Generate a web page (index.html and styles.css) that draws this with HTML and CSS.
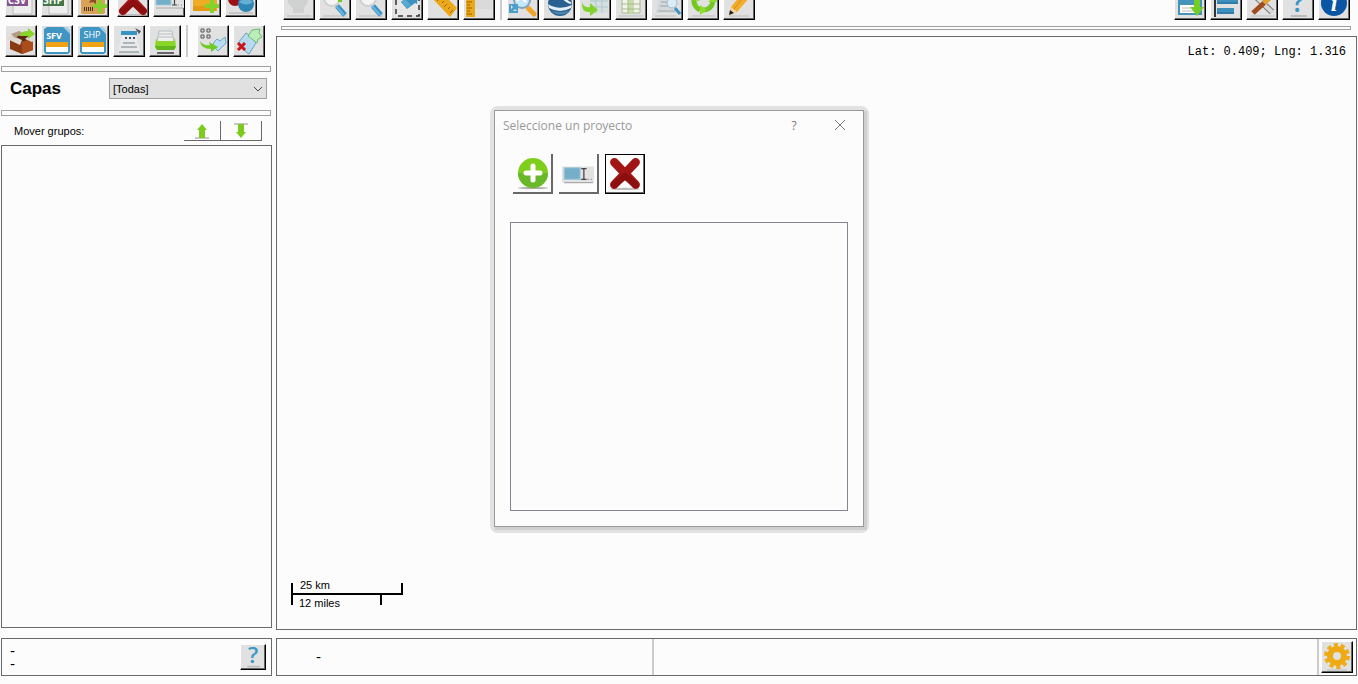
FILE: index.html
```html
<!DOCTYPE html>
<html lang="es">
<head>
<meta charset="UTF-8">
<meta name="viewport" content="width=device-width, initial-scale=1.0">
<title>Capas</title>
<link rel="stylesheet" href="styles.css">
</head>
<body>

<!-- shapes shared by several buttons -->
<svg class="defs" aria-hidden="true">
  <symbol id="plus" viewBox="0 0 14 14"><path d="M5 0h4v5h5v4H9v5H5V9H0V5h5z" fill="#84d32c"/></symbol>
  <symbol id="cross" viewBox="0 0 30 30">
    <ellipse cx="15" cy="29" rx="14" ry="1" fill="#bbb"/>
    <path d="M5 4l20 21M25 4L5 25" stroke="#a31414" stroke-width="8" stroke-linecap="round"/>
    <path d="M15 17L5 25M15 17l10 8" stroke="#8c0f0f" stroke-width="6" stroke-linecap="round"/>
  </symbol>
  <symbol id="rename" viewBox="0 0 30 30">
    <path d="M0 7h30v15H0z" fill="#e2e2e2"/><path d="M2 8h15v11H2z" fill="#75aec8" stroke="#a3c8d8"/>
    <path d="M2 22h27" stroke="#aaa"/><path d="M18 9h5M20.500 9v10M18 19h5" stroke="#444" stroke-width="1.200" fill="none"/>
    <path d="M24 19h1M27 19h1" stroke="#888"/>
  </symbol>
  <symbol id="file" viewBox="0 0 30 30">
    <path d="M5 1h17l6 6v19l-2 2H4l-2-2V3z" fill="#3f96c2"/><path d="M21 1l7 7V4l-3-3z" fill="#a5d0e4"/>
    <path d="M4 16h22v5H4z" fill="#f0a314"/><path d="M4 21h22v5H4z" fill="#fff"/>
  </symbol>
  <symbol id="lens" viewBox="0 0 30 30">
    <path d="M3 27h24" stroke="#bbb"/><circle cx="12" cy="9" r="8" fill="#f4f4f4" stroke="#cfcfcf" stroke-width="2"/>
    <path d="M17 17l8 9" stroke="#3d93c4" stroke-width="5"/><path d="M16 17l8 9" stroke="#68b6de" stroke-width="2"/>
  </symbol>
  <symbol id="help" viewBox="0 0 30 30">
    <text x="15" y="23" text-anchor="middle" font-family="Open Sans, sans-serif" font-weight="600" font-size="28" fill="#3c97c7">?</text>
    <path d="M8 27h16" stroke="#bbb" stroke-width="2"/>
  </symbol>
</svg>

<aside class="side">
  <div class="toolbar cut">
    <button class="tool" aria-label="Importar CSV"><svg viewBox="0 0 30 30"><path d="M7 10h19v18H7z" fill="#eee" stroke="#bbb"/><path d="M1 8h21v12H1z" fill="#87538f"/><text x="11" y="18" text-anchor="middle" class="tag">CSV</text></svg></button>
    <button class="tool" aria-label="Importar SHP"><svg viewBox="0 0 30 30"><path d="M7 10h19v18H7z" fill="#eee" stroke="#bbb"/><path d="M1 8h21v12H1z" fill="#437747"/><text x="11" y="18" text-anchor="middle" class="tag">SHP</text></svg></button>
    <button class="tool" aria-label="Nuevo paquete"><svg viewBox="0 0 30 30"><path d="M3 6h24v21l-2 1H4l-1-1z" fill="#d9a257"/><path d="M13 13l-2 4 4-1 3 2v-4z" fill="#8a4f20"/><path d="M6 23h10" stroke="#493118" stroke-width="4" stroke-dasharray="1 1"/><use href="#plus" x="15" y="13" width="14" height="14"/></svg></button>
    <button class="tool gap" aria-label="Eliminar capa"><svg viewBox="0 0 30 30"><use href="#cross" width="30" height="30"/></svg></button>
    <button class="tool" aria-label="Renombrar"><svg viewBox="0 0 30 30"><use href="#rename" width="30" height="30"/></svg></button>
    <button class="tool" aria-label="Nuevo grupo"><svg viewBox="0 0 30 30"><path d="M3 6h22l2 2v17H3z" fill="#eeae24"/><path d="M3 20h23v5H3z" fill="#e49a12"/><use href="#plus" x="15" y="13" width="14" height="14"/></svg></button>
    <button class="tool" aria-label="Estilos"><svg viewBox="0 0 30 30"><path d="M3 27h24" stroke="#aaa"/><circle cx="9" cy="13" r="7" fill="#9a1014"/><circle cx="20" cy="18" r="8" fill="#2e86b5"/><path d="M13 16q7-6 14 0-7 5-14 0" fill="#64b0d4"/></svg></button>
  </div>

  <div class="toolbar second">
    <button class="tool" aria-label="Exportar"><svg viewBox="0 0 30 30"><path d="M4 13l12 3 11-4v12l-11 4-12-5z" fill="#873a14"/><path d="M16 16l11-4v12l-11 4z" fill="#a94d1c"/><path d="M4 13l10-6 13 5-11 4z" fill="#5c280f"/><path d="M1 13l4-4 11 5-2 5zM10 6l6-2-3 5zM24 9l5 5-3 2-7-3z" fill="#ded9d2"/><path d="M5 8l8-3 4 2-8 5z" fill="#b69b84"/><path d="M13 10q2-5 9-5V2l7 6-7 5v-3z" fill="#88d42a"/></svg></button>
    <button class="tool" aria-label="Guardar SFV"><svg viewBox="0 0 30 30"><use href="#file" width="30" height="30"/><text x="12" y="13" text-anchor="middle" class="tag small">SFV</text></svg></button>
    <button class="tool" aria-label="Guardar SHP"><svg viewBox="0 0 30 30"><use href="#file" width="30" height="30"/><text x="14" y="12" text-anchor="middle" class="tag small thin">SHP</text></svg></button>
    <button class="tool" aria-label="Informe"><svg viewBox="0 0 30 30"><path d="M8 8h14l4 18H4z" fill="#e9eaeb"/><path d="M7 5h16v4H7z" fill="#3993c0"/><path d="M21 2l6 3-2 3z" fill="#555"/><path d="M11 12h10" stroke="#455058" stroke-width="2" stroke-dasharray="2 2"/><path d="M9 17h12M7 21h16M5 26h20" stroke="#aeb5b8" stroke-width="2"/></svg></button>
    <button class="tool" aria-label="Imprimir"><svg viewBox="0 0 30 30"><path d="M9 5h13l2 11H7z" fill="#eee" stroke="#b5bec2"/><path d="M9 8h13M8 11h15" stroke="#b5bec2"/><path d="M6 12l1 3h17l1-3 1 9-2 3H7l-2-3z" fill="#89d628"/><path d="M5 20h21l-2 4H7z" fill="#61b51d"/><path d="M7 27h17" stroke="#666" stroke-width="2"/></svg></button>
    <span class="sep"></span>
    <button class="tool" aria-label="Agregar al mapa"><svg viewBox="0 0 30 30"><path d="M3 3h3v3H3zM9 3h3v3H9zM3 9h3v3H3zM9 9h3v3H9z" fill="none" stroke="#555"/><path d="M16 16l3-3 3 2 5-4 1 6-8 8-5-5z" fill="#b9ddf2" stroke="#67a9cf"/><path d="M2 15q3 5 10 4l-1-3 9 5-7 5v-3Q3 23 2 15z" fill="#72ca25"/></svg></button>
    <button class="tool" aria-label="Quitar geometría"><svg viewBox="0 0 30 30"><path d="M4 17l8-10 5 3 5 7-7 11-4-3z" fill="#b7daef" stroke="#6aa3c8"/><path d="M14 10l4-6 8-1-1 4 3 4-4 2-1 4z" fill="#bcecb8" stroke="#68bd70"/><path d="M4 17l7 7M11 17l-7 7" stroke="#c9151c" stroke-width="3"/></svg></button>
  </div>

  <hr class="groove">
  <div class="layers-head">
    <label for="capas">Capas</label>
    <div class="select">
      <select id="capas"><option>[Todas]</option></select>
      <svg viewBox="0 0 10 6"><path d="M1 1l4 4 4-4" fill="none" stroke="#444"/></svg>
    </div>
  </div>
  <hr class="groove">
  <div class="move">
    <span>Mover grupos:</span>
    <button class="flat" aria-label="Subir"><svg viewBox="0 0 16 16"><path d="M1 15h14" stroke="#c8c8cc" stroke-width="2"/><path d="M8 1l5 6h-2v8H5V7H3z" fill="#7ecb1f"/></svg></button>
    <button class="flat" aria-label="Bajar"><svg viewBox="0 0 16 16"><path d="M1 1h14" stroke="#c8c8cc" stroke-width="2"/><path d="M8 15l5-6h-2V1H5v8H3z" fill="#7ecb1f"/></svg></button>
  </div>
  <div class="list"></div>
  <div class="status">
    <div class="counts"><span>-</span><span>-</span></div>
    <button class="tool small" aria-label="Ayuda"><svg viewBox="0 0 30 30"><use href="#help" width="30" height="30"/></svg></button>
  </div>
</aside>

<main class="main">
  <div class="toolbar cut">
    <button class="tool" aria-label="Mover mapa"><svg viewBox="0 0 30 30"><path d="M3 5h24l-4 10-3 4v5H9v-5l-5-5z" fill="#d0d1d1"/><path d="M3 27h24" stroke="#bbb"/></svg></button>
    <button class="tool" aria-label="Acercar"><svg viewBox="0 0 30 30"><use href="#lens" width="30" height="30"/><path d="M18 9h4v4h-4z" fill="#74c921"/></svg></button>
    <button class="tool" aria-label="Alejar"><svg viewBox="0 0 30 30"><use href="#lens" width="30" height="30"/></svg></button>
    <button class="tool" aria-label="Zoom a selección"><svg viewBox="0 0 30 30"><path d="M4 3h23v24H4z" fill="#e8e8e8" stroke="#333" stroke-width="1.500" stroke-dasharray="5 4"/><path d="M9 13l7-6 10-1-1 9-2-1-8 6z" fill="#3b93c3"/><path d="M9 13l4-3 6 6-4 3z" fill="#59a9d2"/></svg></button>
    <button class="tool" aria-label="Medir"><svg viewBox="0 0 30 30"><path d="M3 8l8-7 18 18-7 9z" fill="#eca817"/><path d="M12 9l-3 3M16 12l-2 2M19 15l-3 3M22 18l-2 2M25 21l-3 3" stroke="#95630d"/></svg></button>
    <button class="tool" aria-label="Regla"><svg viewBox="0 0 30 30"><path d="M11 2h17v18H11z" fill="#dadada"/><path d="M2 2h9v26H2z" fill="#eba817"/><path d="M3 13h5M3 16h3M3 19h5M3 22h3M3 25h5" stroke="#95630d"/></svg></button>
    <span class="sep"></span>
    <button class="tool" aria-label="Buscar en mapa"><svg viewBox="0 0 30 30"><path d="M20 19l6 6" stroke="#f0a52a" stroke-width="5" stroke-linecap="round"/><circle cx="14" cy="11" r="8" fill="#c4e8fa" stroke="#7ca5c4" stroke-width="2"/><path d="M9 12l4-4 5 5" stroke="#fff" stroke-width="2" fill="none"/><path d="M2 15h8v8L7 20l-3 3-2-2 3-3z" fill="#4b9dcb"/><path d="M2 15v8h8" fill="none" stroke="#4b9dcb" stroke-width="2"/></svg></button>
    <button class="tool" aria-label="Globo"><svg viewBox="0 0 30 30"><circle cx="16" cy="15" r="12" fill="#28608f"/><path d="M4 15q11 7 24 1l-1 3q-11 6-22 0z" fill="#e4edf4"/><path d="M6 21q10 4 20 0l-3 3q-7 3-13 0z" fill="#4c86b0"/><path d="M15 4q3 8 11 11l2-1Q20 10 18 3z" fill="#eff4f8"/></svg></button>
    <button class="tool" aria-label="Cargar mapa"><svg viewBox="0 0 30 30"><path d="M10 4h18v20H10z" fill="#d3e0df"/><path d="M16 4v20M22 4v20M10 12h18M10 18h18" stroke="#b3c9cc"/><path d="M2 13q1 6 8 5v-4l8 7-8 6v-4Q1 24 2 13z" fill="#80d32a"/></svg></button>
    <button class="tool" aria-label="Tabla"><svg viewBox="0 0 30 30"><path d="M6 4h18v20H6z" fill="#f1f4e8" stroke="#a8ba90"/><path d="M12 4h4v20h-4z" fill="#c7dda6"/><path d="M6 10h18M6 15h18M6 20h18M12 4v20M17 4v20" stroke="#a8ba90"/><path d="M3 27h24" stroke="#bbb"/></svg></button>
    <button class="tool" aria-label="Buscar atributos"><svg viewBox="0 0 30 30"><path d="M8 4h12l5 20H4z" fill="#d5d9db"/><path d="M9 13h10M8 17h10M6 22h17" stroke="#9ba6ac"/><circle cx="20" cy="14" r="5" fill="#d9edf7" stroke="#aab9c1"/><path d="M23 19l5 6" stroke="#3d93c4" stroke-width="3"/><path d="M3 27h21" stroke="#bbb"/></svg></button>
    <button class="tool" aria-label="Actualizar"><svg viewBox="0 0 30 30"><path d="M4 27h23" stroke="#bbb"/><path d="M6 9q-1 8 6 12M15 21q8 0 10-8M22 5q4 3 4 8" stroke="#72c721" stroke-width="5" fill="none"/><path d="M12 16l7 5-7 5zM2 11l6-5 4 6zM20 13h9l-4-5z" fill="#8cdb2f"/></svg></button>
    <button class="tool" aria-label="Editar"><svg viewBox="0 0 30 30"><path d="M5 27h20" stroke="#bbb"/><path d="M5 26l2-8L19 3l7 5-13 15z" fill="#f2ad2a"/><path d="M10 20L22 5" stroke="#d98814" stroke-width="1"/><path d="M5 26l2-8 6 5z" fill="#f4d9ae"/><path d="M5 26l1-5 4 3z" fill="#222"/></svg></button>
    <span class="spacer"></span>
    <button class="tool" aria-label="Guardar vista"><svg viewBox="0 0 30 30"><path d="M3 3h24v23H3z" fill="#4593ba"/><path d="M5 16h19v8H5z" fill="#fff"/><path d="M7 19h9M7 22h11" stroke="#bbb"/><path d="M19 8h6v10h4l-7 9-7-9h4z" fill="#74cd24"/></svg></button>
    <button class="tool" aria-label="Alinear"><svg viewBox="0 0 30 30"><path d="M4 2v26" stroke="#333" stroke-width="2"/><path d="M6 9h21v6H6zM6 19h17v6H6z" fill="#3f8fbd"/><path d="M6 14h21M6 24h17" stroke="#246a94"/></svg></button>
    <button class="tool" aria-label="Herramientas"><svg viewBox="0 0 30 30"><path d="M4 27h23" stroke="#bbb"/><path d="M6 5l19 18" stroke="#777" stroke-width="6"/><path d="M6 5l19 18" stroke="#d9d9d9" stroke-width="4"/><path d="M27 5L17 14" stroke="#e2a02c" stroke-width="5"/><path d="M17 14L6 24" stroke="#a04c1c" stroke-width="5"/></svg></button>
    <button class="tool" aria-label="Ayuda"><svg viewBox="0 0 30 30"><use href="#help" width="30" height="30"/></svg></button>
    <button class="tool" aria-label="Información"><svg viewBox="0 0 30 30"><circle cx="15" cy="14" r="13" fill="#0b55a5"/><text x="15" y="22" text-anchor="middle" class="info">i</text></svg></button>
  </div>
  <hr class="groove thin">

  <section class="map">
    <div class="coords">Lat: 0.409; Lng: 1.316</div>
    <div class="scale">
      <div class="km">25 km</div>
      <div class="miles">12 miles</div>
    </div>
  </section>

  <div class="status">
    <div class="cell first">-</div>
    <div class="cell"></div>
    <button class="tool" aria-label="Configuración"><svg viewBox="0 0 30 30"><path d="M5 28h20" stroke="#bbb"/><circle cx="15" cy="14" r="11" fill="none" stroke="#efac16" stroke-width="4" stroke-dasharray="4 2.910"/><circle cx="15" cy="14" r="7" fill="none" stroke="#edaa14" stroke-width="6"/></svg></button>
  </div>
</main>

<div class="dialog" role="dialog" aria-labelledby="dialog-title">
  <div class="titlebar">
    <span id="dialog-title">Seleccione un proyecto</span>
    <button class="caption" aria-label="Ayuda">?</button>
    <button class="caption" aria-label="Cerrar"><svg viewBox="0 0 12 12"><path d="M1 1l10 10M11 1L1 11" stroke="#777"/></svg></button>
  </div>
  <div class="actions">
    <button aria-label="Nuevo proyecto"><svg viewBox="0 0 32 32"><ellipse cx="17" cy="31" rx="15" ry="1" fill="#aaa"/><circle cx="17" cy="16" r="15" fill="#7fce1c"/><path d="M2 16a15 15 0 0 0 30 0z" fill="#69b82a"/><path d="M17 9v14M10 16h14" stroke="#fff" stroke-width="5" stroke-linecap="round"/></svg></button>
    <button aria-label="Renombrar proyecto"><svg viewBox="0 0 30 30"><use href="#rename" y="2" width="30" height="30"/></svg></button>
    <button class="default" aria-label="Eliminar proyecto"><svg viewBox="0 0 30 30"><use href="#cross" width="30" height="30"/></svg></button>
  </div>
  <div class="projects"></div>
</div>

</body>
</html>
```
FILE: styles.css
```css
* { box-sizing: border-box; }

body {
  margin: 0;
  height: 100vh;
  padding: 0 1px 8px;
  display: grid;
  grid-template-columns: 271px 1fr;
  gap: 4px;
  background: #fcfcfc;
  color: #000;
  font-family: "Liberation Sans", Arial, sans-serif;
  font-size: 11px;
}

svg { display: block; }
.defs { position: absolute; width: 0; height: 0; }

button {
  padding: 0;
  font: inherit;
  display: flex;
  align-items: center;
  justify-content: center;
}

.side, .main {
  display: flex;
  flex-direction: column;
  min-width: 0;
  min-height: 0;
}

/* toolbars */
.toolbar {
  display: flex;
  gap: 4px;
  padding: 0 4px;
  flex: none;
}

/* first row is scrolled partly out of view */
.cut {
  height: 17px;
  align-items: flex-end;
  overflow: hidden;
}

.main .cut {
  height: 20px;
  padding: 0 7px;
}

.second { margin: 8px 0 9px; }

.tool {
  flex: none;
  width: 32px;
  height: 32px;
  background: #e1e1e1;
  border: 1px solid #000;
  border-top-color: #fff;
  border-left-color: #fff;
  box-shadow: inset -1px -1px #666;
}

.tool svg { width: 30px; height: 30px; }
.tool.gap { margin-left: 4px; }
.tool.small { width: 26px; height: 26px; }
.tool.small svg { width: 24px; height: 24px; }

.tag {
  font-family: "Open Sans", sans-serif;
  font-weight: bold;
  font-size: 10px;
  fill: #fff;
}

.tag.small { font-size: 9px; }
.tag.thin { font-weight: normal; }

.info {
  font-family: "Liberation Serif", serif;
  font-style: italic;
  font-weight: bold;
  font-size: 24px;
  fill: #fff;
}

.sep {
  width: 2px;
  height: 32px;
  margin: 0 1px;
  background: #ccc;
}

.second .sep { margin: 0 5px 0 1px; }
.spacer { flex: 1; }

.groove {
  flex: none;
  width: 270px;
  height: 6px;
  margin: 0;
  border: 1px solid #a0a0a0;
}

.groove.thin {
  width: auto;
  height: 4px;
  margin: 6px 6px 6px 5px;
}

/* layers */
.layers-head {
  display: flex;
  align-items: flex-start;
  justify-content: space-between;
  height: 38px;
  padding: 6px 5px 0 9px;
}

.layers-head label {
  font-size: 17px;
  font-weight: bold;
  line-height: 22px;
}

.select { position: relative; }

.select select {
  display: block;
  appearance: none;
  width: 158px;
  height: 21px;
  padding: 0 3px;
  border: 1px solid #a0a0a0;
  border-radius: 0;
  background: #e1e1e1;
  color: #000;
  font: inherit;
}

.select svg {
  position: absolute;
  right: 4px;
  top: 8px;
  width: 10px;
  height: 6px;
}

.move {
  display: flex;
  align-items: center;
  height: 29px;
  padding: 1px 10px 0 13px;
}

.move span { flex: 1; }

.flat {
  width: 37px;
  height: 20px;
  background: #fcfcfc;
  border: 0 solid #696969;
  border-width: 0 1px 1px 0;
}

.flat + .flat { width: 41px; }
.flat svg { width: 16px; height: 16px; }

.list {
  flex: 1;
  margin-bottom: 10px;
  border: 1px solid #696969;
}

/* status bars */
.status {
  display: flex;
  flex: none;
  align-items: center;
  height: 38px;
  border: 1px solid #696969;
}

.side .status {
  justify-content: space-between;
  padding: 0 5px 0 8px;
}

.counts {
  display: grid;
  font-size: 15px;
  line-height: 13px;
}

.main .status { padding-right: 3px; }

.cell {
  flex: 1;
  height: 36px;
  border-right: 2px solid #ccc;
  margin-right: 2px;
}

.cell.first {
  flex: 0 0 35%;
  margin-right: 0;
  padding-left: 39px;
  font-size: 15px;
  line-height: 36px;
}

/* map */
.map {
  position: relative;
  flex: 1;
  margin-bottom: 8px;
  border: 1px solid #696969;
}

.coords {
  padding: 8px 10px;
  text-align: right;
  font-family: "Liberation Mono", monospace;
  font-size: 12px;
}

.scale {
  position: absolute;
  left: 14px;
  bottom: 24px;
  width: 112px;
}

.km, .miles {
  height: 12px;
  padding-left: 7px;
  border: 0 solid #000;
  border-width: 0 2px 2px;
  line-height: 5px;
}

.miles {
  width: 91px;
  height: 10px;
  padding-left: 6px;
  border-width: 0 2px;
  line-height: 16px;
}

/* project dialog */
.dialog {
  position: absolute;
  top: 110px;
  left: 0;
  right: 0;
  width: 370px;
  height: 417px;
  margin: 0 auto;
  padding: 0 15px 15px;
  display: flex;
  flex-direction: column;
  background: #fcfcfc;
  border: 1px solid #999;
  box-shadow: 2px 2px 0 1px #cfcfcf;
}

/* soft outer rim, sits behind the dialog */
.dialog::before {
  content: "";
  position: absolute;
  z-index: -1;
  inset: -5px -6px -7px -5px;
  border-radius: 8px;
  background: #e2e2e2;
}

.titlebar {
  display: flex;
  align-items: center;
  height: 28px;
  margin: 0 -15px 0 -7px;
  color: #999;
  font-family: "Open Sans", sans-serif;
  font-size: 12px;
}

.titlebar span { flex: 1; }

.caption {
  width: 46px;
  height: 28px;
  border: 0;
  background: none;
  color: #777;
}

.caption svg { width: 12px; height: 12px; }

.actions {
  display: flex;
  gap: 6px;
  margin: 15px 3px 28px;
}

.actions button {
  width: 40px;
  height: 40px;
  background: #fcfcfc;
  border: 0 solid #696969;
  border-width: 0 2px 2px 0;
}

.actions svg { width: 32px; height: 32px; }

.actions .default {
  border: 1px solid #000;
  box-shadow: inset -1px -1px #696969;
}

.projects {
  flex: 1;
  border: 1px solid #828790;
}
```
